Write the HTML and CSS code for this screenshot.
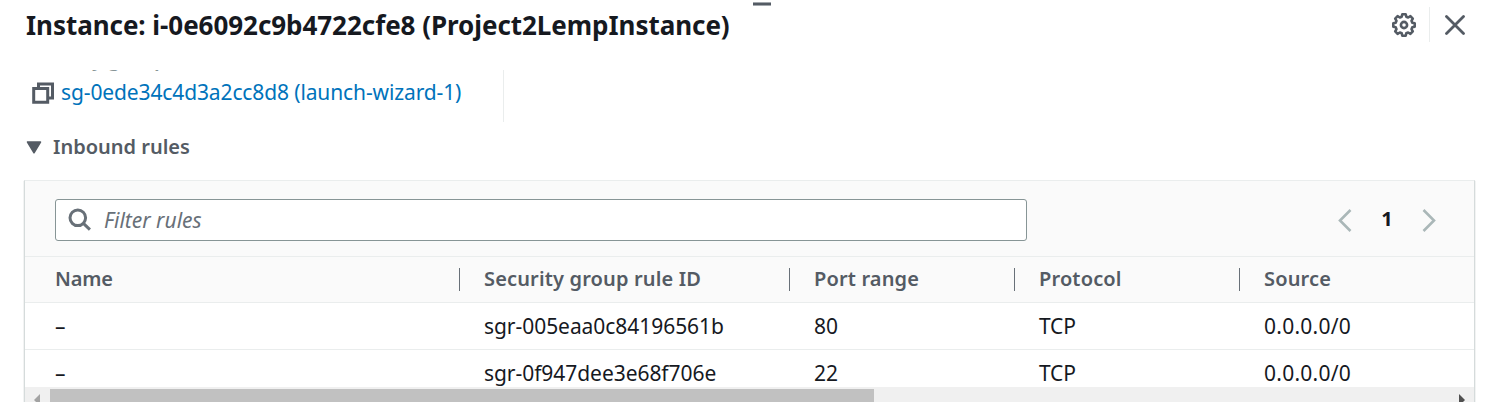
FILE: index.html
```html
<!DOCTYPE html>
<html lang="en">
<head>
<meta charset="utf-8">
<title>Instance details</title>
<link rel="stylesheet" href="styles.css">
</head>
<body>
<div class="panel">
  <header class="panel-header">
    <h1 class="title">Instance: i-0e6092c9b4722cfe8 (Project2LempInstance)</h1>
    <div class="actions">
      <svg class="gear" viewBox="0 0 24 24"><path d="M10.3 1.3h3.4l.6 2.4 1.9.8 2.2-1.3 2.4 2.4-1.3 2.2.8 1.9 2.4.6v3.4l-2.4.6-.8 1.9 1.3 2.2-2.4 2.4-2.2-1.3-1.9.8-.6 2.4h-3.4l-.6-2.4-1.9-.8-2.2 1.3-2.4-2.4 1.3-2.2-.8-1.9-2.4-.6v-3.4l2.4-.6.8-1.9-1.3-2.2 2.4-2.4 2.2 1.3 1.9-.8z"/><circle cx="12" cy="12" r="3.1"/></svg>
      <span class="rule"></span>
      <svg class="close" viewBox="0 0 20 20"><path d="M1.5 1.5l17 17M18.5 1.5l-17 17"/></svg>
    </div>
    <span class="handle"></span>
  </header>
  <main class="content">
    <section class="groups">
      <div class="clip"><span class="label">Security groups</span></div>
      <div class="group">
        <svg class="copy" viewBox="0 0 22 22"><path d="M6.5 5V2h14v14h-4M1.7 6.5h14v13.8h-14z"/></svg>
        <a class="link">sg-0ede34c4d3a2cc8d8 (launch-wizard-1)</a>
      </div>
    </section>
    <h2 class="section"><svg class="caret" viewBox="0 0 16 13"><path d="M1.5 1h13L8 11.8z"/></svg>Inbound rules</h2>
    <div class="card">
      <div class="toolbar">
        <div class="filter">
          <svg class="search" viewBox="0 0 24 24"><circle cx="9.8" cy="9.8" r="7.8"/><path d="M15.4 15.4l6.5 6.2"/></svg>
          <span class="hint">Filter rules</span>
        </div>
        <div class="pager">
          <svg class="chev" viewBox="0 0 14 23"><path d="M12.5 1L2 11.5 12.5 22"/></svg>
          <b class="page">1</b>
          <svg class="chev" viewBox="0 0 14 23"><path d="M1.5 1L12 11.5 1.5 22"/></svg>
        </div>
      </div>
      <div class="row head"><span class="name">Name</span><span>Security group rule ID</span><span>Port range</span><span>Protocol</span><span>Source</span></div>
      <div class="row"><span>–</span><span>sgr-005eaa0c84196561b</span><span>80</span><span class="proto">TCP</span><span class="source">0.0.0.0/0</span></div>
      <div class="row last"><span>–</span><span>sgr-0f947dee3e68f706e</span><span>22</span><span class="proto">TCP</span><span class="source">0.0.0.0/0</span></div>
      <div class="scrollbar">
        <svg class="arrow" viewBox="0 0 6 12"><path d="M6 0v12L0 6z"/></svg>
        <span class="thumb"></span>
        <svg class="arrow right" viewBox="0 0 6 12"><path d="M0 0v12l6-6z"/></svg>
      </div>
    </div>
  </main>
</div>
</body>
</html>
```
FILE: styles.css
```css
* { box-sizing: border-box; }
body { margin: 0; background: #fff; color: #16191f; font: 21px/30px "Noto Sans", sans-serif; overflow: hidden; }
svg { display: block; fill: none; stroke: #545b64; flex: none; }
.panel { height: 402px; overflow: hidden; }
.panel-header { position: relative; display: flex; justify-content: space-between; height: 70px; padding: 7px 26px 0 26px; }
.title { margin: 0; font-size: 26px; line-height: 36px; font-weight: 700; letter-spacing: -0.05px; white-space: nowrap; }
.handle { position: absolute; left: 753px; top: 2px; width: 18px; height: 4px; background: #545b64; border: solid #a3a8ad; border-width: 1px 0; }
.actions { display: flex; align-items: center; height: 35px; }
.gear { width: 24px; height: 24px; stroke-width: 2.6; stroke-linejoin: round; }
.rule { width: 1px; height: 35px; margin: 0 15px 0 13px; background: #eaeded; }
.close { width: 20px; height: 20px; stroke-width: 2.8; stroke-linecap: round; }
.groups { width: 504px; height: 52px; border-right: 1px solid #eaeded; }
.clip { display: flex; align-items: flex-end; height: 1px; padding-left: 24px; overflow: hidden; color: #879596; }
.label { margin-bottom: -3px; font-size: 20px; font-weight: 600; }
.group { display: flex; align-items: center; gap: 7px; height: 43px; padding-left: 32px; }
.copy { width: 22px; height: 22px; stroke-width: 3; }
.link { margin-bottom: 2px; color: #0073bb; letter-spacing: -0.12px; }
.section { display: flex; align-items: center; gap: 11px; height: 30px; margin: 10px 0 0 26px; font-size: 20px; font-weight: 600; color: #545b64; }
.caret { width: 16px; height: 13px; fill: #545b64; stroke-width: 1.5; stroke-linejoin: round; }
.card { width: 1451px; height: 230px; margin: 18px 0 0 24px; border: 1px solid #d5dbdb; border-top-color: #eaeded; box-shadow: 0 1px 1px rgba(0, 28, 36, .3); }
.toolbar { display: flex; justify-content: space-between; height: 75px; padding: 18px 38px 0 30px; background: #fafafa; }
.filter { display: flex; align-items: center; gap: 12px; width: 972px; height: 42px; padding-left: 12px; border: 1px solid #879596; border-radius: 3px; background: #fff; }
.search { width: 24px; height: 24px; stroke: #687078; stroke-width: 3; }
.hint { color: #687078; font-style: italic; }
.pager { display: flex; align-items: center; justify-content: space-between; width: 98px; height: 42px; }
.chev { width: 14px; height: 23px; stroke: #aab7b8; stroke-width: 2.6; }
.page { padding-bottom: 2px; font-size: 20px; font-weight: 700; }
.row { display: grid; grid-template-columns: 429px 330px 225px 225px 1fr; align-items: center; height: 47px; padding: 0 0 1px 30px; border-top: 1px solid #eaeded; letter-spacing: -0.05px; }
.head { height: 46px; padding-bottom: 2px; background: #fafafa; color: #545b64; font-size: 20px; font-weight: 600; letter-spacing: 0.15px; }
.head > .name { letter-spacing: -0.2px; }
.head > span { position: relative; }
.head > span + span::before { content: ""; position: absolute; left: -25px; top: 4px; width: 1px; height: 23px; background: #687078; }
.proto { letter-spacing: -0.2px; }
.source { letter-spacing: 0.25px; }
.last { height: 38px; overflow: hidden; align-items: start; line-height: 46px; }
.scrollbar { display: flex; align-items: flex-start; height: 23px; padding: 2px 9px 0; background: #f0f0f0; }
.arrow { width: 6px; height: 12px; margin-top: 5px; fill: #a3a3a3; stroke: none; }
.arrow.right { margin-left: auto; fill: #505050; }
.thumb { width: 824px; height: 20px; margin-left: 10px; background: #c1c1c1; }
```
